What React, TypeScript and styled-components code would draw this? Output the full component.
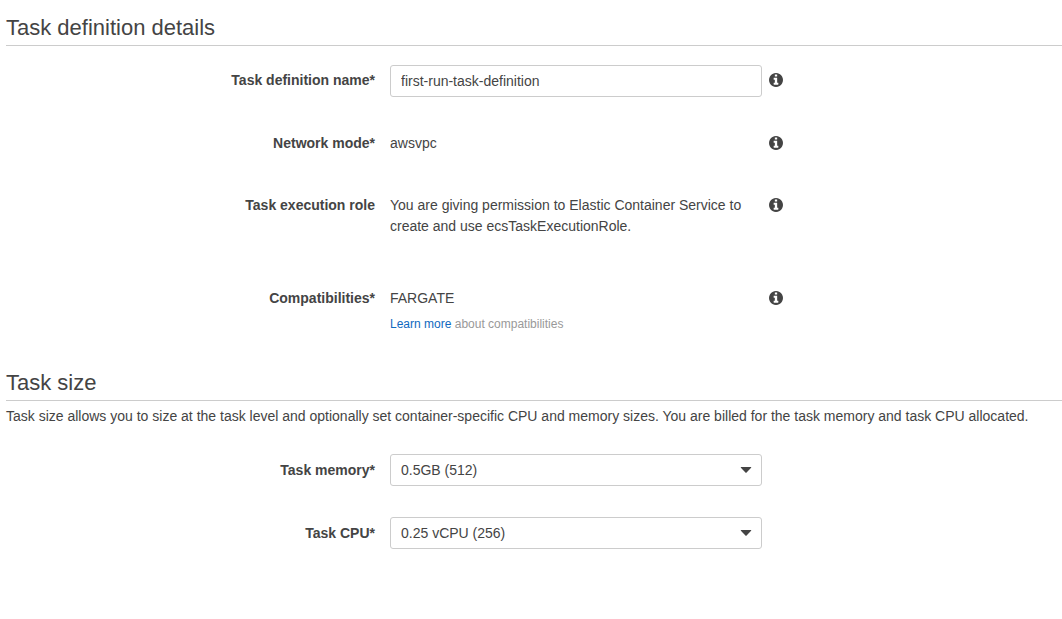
import React from "react";
import styled, { createGlobalStyle } from "styled-components";

const GlobalStyle = createGlobalStyle`
  *, *::before, *::after { box-sizing: border-box; }
  body {
    margin: 0;
    background: #fff;
    color: #444;
    font-family: "Liberation Sans", Arial, sans-serif;
    font-size: 14px;
    line-height: 21px;
  }
`;

const Page = styled.main`
  padding: 12px 0 32px 6px;
`;

const Section = styled.section`
  & + & {
    margin-top: 34px;
  }
`;

const Heading = styled.h2`
  margin: 0;
  padding-bottom: 2px;
  border-bottom: 1px solid #ccc;
  font-size: 22px;
  font-weight: 400;
  line-height: 31px;
`;

const Intro = styled.p`
  margin: 5px 0 0;
`;

const Rows = styled.div<{ $top: number }>`
  display: flex;
  flex-direction: column;
  gap: 31px;
  margin-top: ${(p) => p.$top}px;
`;

const Row = styled.div`
  display: grid;
  grid-template-columns: 369fr 387fr 300fr;
  align-items: start;
`;

const Label = styled.label<{ $select?: boolean }>`
  padding: ${(p) => (p.$select ? 6 : 5)}px 0 5px;
  font-weight: 700;
  text-align: right;
`;

const Field = styled.div`
  min-width: 0;
  padding-left: 15px;
`;

const Value = styled.output`
  display: block;
  padding: 5px 0;
`;

const Permission = styled(Value)`
  margin-bottom: 10px;
`;

const Help = styled.p`
  margin: 1px 0 0;
  color: #999;
  font-size: 12px;
  line-height: 18px;
`;

const Link = styled.a`
  color: #0f69c0;
  text-decoration: none;
  &:hover {
    text-decoration: underline;
  }
`;

const TextInput = styled.input`
  display: block;
  width: 100%;
  height: 32px;
  padding: 0 10px;
  border: 1px solid #ccc;
  border-radius: 3px;
  background: #fff;
  color: inherit;
  font: inherit;
`;

const SelectBox = styled.div`
  position: relative;
`;

const Select = styled.select`
  display: block;
  width: 100%;
  height: 32px;
  padding: 0 32px 0 10px;
  appearance: none;
  border: 1px solid #ccc;
  border-radius: 3px;
  background: #fff;
  color: inherit;
  font: inherit;
`;

const Caret = styled.svg`
  position: absolute;
  top: 13px;
  right: 10px;
  width: 12px;
  height: 6px;
  fill: #444;
  pointer-events: none;
`;

const InfoButton = styled.button`
  display: flex;
  justify-self: start;
  margin-left: 7px;
  padding: 8px 0;
  border: 0;
  background: none;
  color: #444;
  cursor: pointer;
`;

function Info({ about }: { about: string }) {
  return (
    <InfoButton type="button" aria-label={`About ${about}`}>
      <svg width="14" height="14" viewBox="0 128 1536 1536" fill="currentColor" aria-hidden="true">
        <path d="M1024 1376v-160q0-14-9-23t-23-9h-96v-512q0-14-9-23t-23-9h-320q-14 0-23 9t-9 23v160q0 14 9 23t23 9h96v320h-96q-14 0-23 9t-9 23v160q0 14 9 23t23 9h448q14 0 23-9t9-23zm-128-896v-160q0-14-9-23t-23-9h-192q-14 0-23 9t-9 23v160q0 14 9 23t23 9h192q14 0 23-9t9-23zm640 416q0 209-103 385.5t-279.5 279.5-385.5 103-385.5-103-279.5-279.5-103-385.5 103-385.5 279.5-279.5 385.5-103 385.5 103 279.5 279.5 103 385.5z" />
      </svg>
    </InfoButton>
  );
}

function SelectRow({ id, label, options }: { id: string; label: string; options: string[] }) {
  return (
    <Row>
      <Label htmlFor={id} $select>
        {label}
      </Label>
      <Field>
        <SelectBox>
          <Select id={id} defaultValue={options[0]}>
            {options.map((option) => (
              <option key={option}>{option}</option>
            ))}
          </Select>
          <Caret viewBox="0 0 12 6" aria-hidden="true">
            <path d="M1.2 0h9.6q.9.1.3.8L6.6 5.4q-.6.5-1.2 0L.9.8Q.3.1 1.2 0z" />
          </Caret>
        </SelectBox>
      </Field>
    </Row>
  );
}

export default function App() {
  return (
    <>
      <GlobalStyle />
      <Page>
        <Section>
          <Heading>Task definition details</Heading>
          <Rows $top={19}>
            <Row>
              <Label htmlFor="name">Task definition name*</Label>
              <Field>
                <TextInput id="name" type="text" defaultValue="first-run-task-definition" />
              </Field>
              <Info about="task definition name" />
            </Row>
            <Row>
              <Label htmlFor="network">Network mode*</Label>
              <Field>
                <Value id="network">awsvpc</Value>
              </Field>
              <Info about="network mode" />
            </Row>
            <Row>
              <Label htmlFor="role">Task execution role</Label>
              <Field>
                <Permission id="role">
                  You are giving permission to Elastic Container Service to create and use
                  ecsTaskExecutionRole.
                </Permission>
              </Field>
              <Info about="task execution role" />
            </Row>
            <Row>
              <Label htmlFor="compatibilities">Compatibilities*</Label>
              <Field>
                <Value id="compatibilities">FARGATE</Value>
                <Help>
                  <Link href="#compatibilities">Learn more</Link> about compatibilities
                </Help>
              </Field>
              <Info about="compatibilities" />
            </Row>
          </Rows>
        </Section>
        <Section>
          <Heading>Task size</Heading>
          <Intro>
            Task size allows you to size at the task level and optionally set container-specific CPU
            and memory sizes. You are billed for the task memory and task CPU allocated.
          </Intro>
          <Rows $top={27}>
            <SelectRow id="memory" label="Task memory*" options={["0.5GB (512)", "1GB (1024)", "2GB (2048)"]} />
            <SelectRow id="cpu" label="Task CPU*" options={["0.25 vCPU (256)", "0.5 vCPU (512)", "1 vCPU (1024)"]} />
          </Rows>
        </Section>
      </Page>
    </>
  );
}
